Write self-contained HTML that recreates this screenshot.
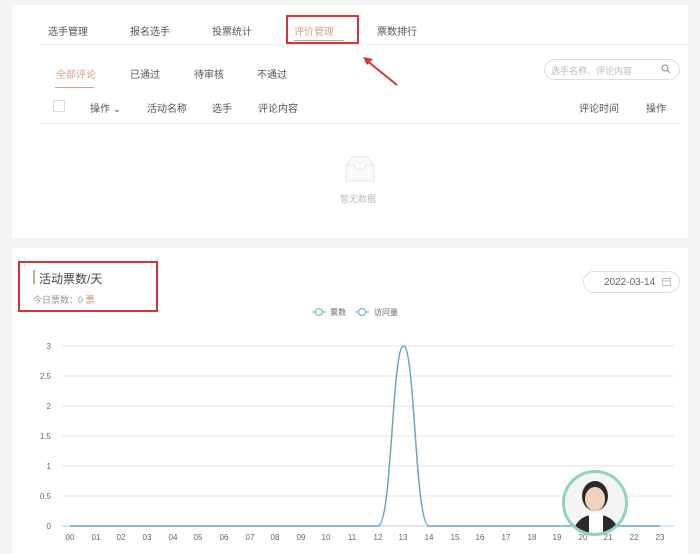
<!DOCTYPE html>
<html><head><meta charset="utf-8"><style>
body{margin:0;width:700px;height:554px;background:#f3f4f6;font-family:"Liberation Sans","Noto Sans CJK SC",sans-serif;position:relative;overflow:hidden;color:#555}
.a{position:absolute;white-space:nowrap}
.card{position:absolute;background:#fff}
.t{font-size:10px;color:#555}
</style></head><body>
<div class="card" style="left:12px;top:5px;width:676px;height:233px"></div>
<div class="card" style="left:12px;top:248px;width:676px;height:306px"></div>

<div class="a t" style="left:48px;top:23px">选手管理</div>
<div class="a t" style="left:130px;top:23px">报名选手</div>
<div class="a t" style="left:212px;top:23px">投票统计</div>
<div class="a t" style="left:294px;top:23px;color:#d9a08c">评价管理</div>
<div class="a" style="left:294px;top:40px;width:50px;height:1px;background:#d9a08c"></div>
<div class="a" style="left:286px;top:15px;width:73px;height:29px;border:2px solid #d9343a;box-sizing:border-box"></div>
<div class="a t" style="left:377px;top:23px">票数排行</div>
<div class="a" style="left:40px;top:44px;width:648px;height:1px;background:#eee"></div>
<svg class="a" style="left:360px;top:55px" width="42" height="34"><line x1="37" y1="30" x2="6" y2="5" stroke="#d9343a" stroke-width="2"/><path d="M3 2 L13 4 L7 10 Z" fill="#d9343a"/></svg>

<div class="a t" style="left:56px;top:66px;color:#d9a08c">全部评论</div>
<div class="a" style="left:55px;top:87px;width:39px;height:1px;background:#d9a08c"></div>
<div class="a t" style="left:130px;top:66px">已通过</div>
<div class="a t" style="left:194px;top:66px">待审核</div>
<div class="a t" style="left:257px;top:66px">不通过</div>
<div class="a" style="left:544px;top:59px;width:136px;height:21px;border:1px solid #ddd;border-radius:11px;box-sizing:border-box"></div>
<div class="a" style="left:551px;top:64px;font-size:9px;color:#bbb">选手名称、评论内容</div>
<svg class="a" style="left:661px;top:64px" width="10" height="10"><circle cx="4" cy="4" r="3" fill="none" stroke="#888"/><line x1="6.5" y1="6.5" x2="9" y2="9" stroke="#888"/></svg>

<div class="a" style="left:53px;top:100px;width:10px;height:10px;border:1px solid #ddd"></div>
<div class="a t" style="left:90px;top:100px">操作 ⌄</div>
<div class="a t" style="left:147px;top:100px">活动名称</div>
<div class="a t" style="left:212px;top:100px">选手</div>
<div class="a t" style="left:258px;top:100px">评论内容</div>
<div class="a t" style="left:579px;top:100px">评论时间</div>
<div class="a t" style="left:646px;top:100px">操作</div>
<div class="a" style="left:40px;top:123px;width:640px;height:1px;background:#eee"></div>
<svg class="a" style="left:342px;top:155px" width="36" height="28"><path d="M4 10 L10 2 L26 2 L32 10 L32 26 L4 26 Z M4 10 L12 10 L14 14 L22 14 L24 10 L32 10" fill="#fafafa" stroke="#e4e4e4"/></svg>
<div class="a" style="left:340px;top:192px;font-size:9px;color:#bbb">暂无数据</div>

<div class="a" style="left:33px;top:270px;width:2px;height:14px;background:#d9a08c"></div>
<div class="a" style="left:39px;top:270px;font-size:12px;color:#444">活动票数/天</div>
<div class="a" style="left:33px;top:293px;font-size:9px;color:#999">今日票数：0 <span style="color:#d9846c">票</span></div>
<div class="a" style="left:18px;top:261px;width:140px;height:51px;border:2px solid #d9343a;box-sizing:border-box"></div>
<div class="a" style="left:583px;top:271px;width:97px;height:22px;border:1px solid #ddd;border-radius:11px;box-sizing:border-box"></div>
<div class="a" style="left:604px;top:277px;font-size:10px;color:#666">2022-03-14</div>
<svg class="a" style="left:662px;top:277px" width="9" height="9"><rect x="0.5" y="1.5" width="8" height="7" fill="none" stroke="#bbb"/><line x1="0" y1="4" x2="9" y2="4" stroke="#bbb"/></svg>

<svg class="a" style="left:0;top:300px" width="700" height="254">
<g font-size="8" fill="#666" font-family="Liberation Sans, Noto Sans CJK SC, sans-serif">
<line x1="312" y1="12" x2="326" y2="12" stroke="#5ab4a8"/><circle cx="319" cy="12" r="3.5" fill="#fff" stroke="#5ab4a8"/>
<text x="330" y="15">票数</text>
<line x1="355" y1="12" x2="369" y2="12" stroke="#6aa3c8"/><circle cx="362" cy="12" r="3.5" fill="#fff" stroke="#6aa3c8"/>
<text x="374" y="15">访问量</text>
<g stroke="#e3e3e3"><line x1="62" y1="46" x2="674" y2="46"/><line x1="62" y1="76" x2="674" y2="76"/><line x1="62" y1="106" x2="674" y2="106"/><line x1="62" y1="136" x2="674" y2="136"/><line x1="62" y1="166" x2="674" y2="166"/><line x1="62" y1="196" x2="674" y2="196"/></g>
<line x1="62" y1="226" x2="674" y2="226" stroke="#b8cfe0"/>
<g text-anchor="end"><text x="51" y="49">3</text><text x="51" y="79">2.5</text><text x="51" y="109">2</text><text x="51" y="139">1.5</text><text x="51" y="169">1</text><text x="51" y="199">0.5</text><text x="51" y="229">0</text></g>
<g text-anchor="middle">
<text x="70" y="240">00</text><text x="96" y="240">01</text><text x="121" y="240">02</text><text x="147" y="240">03</text><text x="173" y="240">04</text><text x="198" y="240">05</text><text x="224" y="240">06</text><text x="250" y="240">07</text><text x="275" y="240">08</text><text x="301" y="240">09</text><text x="326" y="240">10</text><text x="352" y="240">11</text><text x="378" y="240">12</text><text x="403" y="240">13</text><text x="429" y="240">14</text><text x="455" y="240">15</text><text x="480" y="240">16</text><text x="506" y="240">17</text><text x="532" y="240">18</text><text x="557" y="240">19</text><text x="583" y="240">20</text><text x="608" y="240">21</text><text x="634" y="240">22</text><text x="660" y="240">23</text>
</g>
<path d="M70 226 L378 226 C392 226 392 46 403.5 46 C415 46 415 226 429 226 L660 226" fill="none" stroke="#6aa3c8" stroke-width="1.5"/>
</g>
</svg>

<div class="a" style="left:562px;top:470px;width:66px;height:66px;border-radius:50%;border:3px solid #8fd3c0;background:#f5f5f5;box-sizing:border-box;overflow:hidden">
<div class="a" style="left:17px;top:8px;width:26px;height:30px;border-radius:50%;background:#2a2a2a"></div>
<div class="a" style="left:20px;top:14px;width:20px;height:24px;border-radius:50%;background:#f0d2c0"></div>
<div class="a" style="left:8px;top:42px;width:46px;height:24px;border-radius:20px 20px 0 0;background:#2b2b2b"></div>
<div class="a" style="left:24px;top:40px;width:14px;height:20px;background:#fff"></div>
</div>
</body></html>
